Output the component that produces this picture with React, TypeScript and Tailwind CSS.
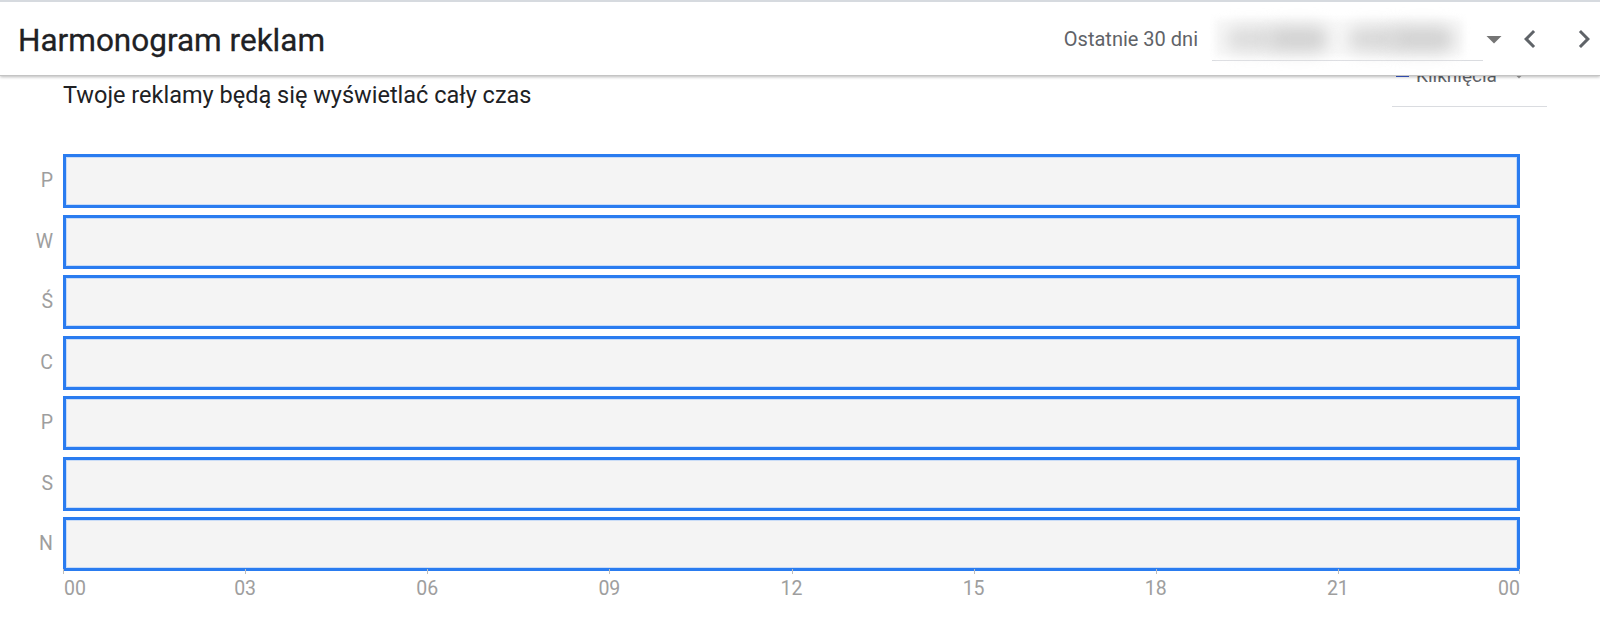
import React from "react";

const days = ["P", "W", "Ś", "C", "P", "S", "N"];
const hours = ["00", "03", "06", "09", "12", "15", "18", "21", "00"];
const GRID_W = 1457;

export default function App() {
  return (
    <div className="relative w-full h-[622px] overflow-hidden bg-white font-['Roboto',sans-serif] text-[#202124]">
      {/* Header */}
      <div className="relative z-10 h-[76px] bg-white border-t-2 border-[#d6dadf] border-b border-b-[#c4c4c4] shadow-[0_1px_3px_rgba(0,0,0,0.28)] flex items-center">
        <div className="pl-[18px] pt-[4px] text-[31.5px] leading-[36px] font-normal [-webkit-text-stroke:0.3px_#202124] text-[#202124]">
          Harmonogram reklam
        </div>
        <div className="ml-auto flex items-center -mr-[2px]">
          <span className="text-[20px] text-[#5f6368] mr-[14px]">Ostatnie 30 dni</span>
          <div className="relative w-[271px] h-[44px] border-b border-[#dadce0]">
            <div className="absolute left-[2px] right-[20px] top-[2px] bottom-[3px] bg-[#f8f8f8] blur-[3px]" />
            <div className="absolute left-[14px] top-[10px] w-[50px] h-[24px] rounded-full bg-[#dcdcdc] blur-[8px]" />
            <div className="absolute left-[56px] top-[9px] w-[60px] h-[26px] rounded-full bg-[#d2d2d2] blur-[8px]" />
            <div className="absolute left-[136px] top-[10px] w-[52px] h-[24px] rounded-full bg-[#d8d8d8] blur-[8px]" />
            <div className="absolute left-[178px] top-[9px] w-[64px] h-[26px] rounded-full bg-[#d2d2d2] blur-[8px]" />
          </div>
          <svg width="36" height="36" viewBox="0 0 24 24" className="-ml-[7px]">
            <path d="M7 10l5 5 5-5z" fill="#757575" />
          </svg>
          <svg width="36" height="36" viewBox="0 0 24 24">
            <path d="M15.41 7.41L14 6l-6 6 6 6 1.41-1.41L10.83 12z" fill="#5f6368" />
          </svg>
          <svg width="36" height="36" viewBox="0 0 24 24" className="ml-[18px]">
            <path d="M10 6L8.59 7.41 13.17 12l-4.58 4.59L10 18l6-6z" fill="#5f6368" />
          </svg>
        </div>
      </div>

      {/* Content */}
      <div className="relative">
        <div className="flex items-start justify-between">
          <div className="pl-[63px] pt-[4px] text-[23.5px] leading-[30px] text-[#202124]">
            Twoje reklamy będą się wyświetlać cały czas
          </div>
          <div className="mr-[53px] -mt-[12px] w-[155px] h-[43px] border-b border-[#dadce0] flex items-start">
            <div className="flex items-center h-[24px] pl-[4px]">
              <span className="w-[13px] h-[2px] bg-[#3b5bd0] mr-[7px]" />
              <span className="text-[19px] leading-[24px] text-[#5f6368]">Kliknięcia</span>
              <svg width="20" height="20" viewBox="0 0 24 24" className="ml-[12px]">
                <path d="M7 10l5 5 5-5z" fill="#9e9e9e" />
              </svg>
            </div>
          </div>
        </div>

        <div className="mt-[44px] flex flex-col gap-[6.5px]">
          {days.map((d, i) => (
            <div key={i} className="flex items-center">
              <div className="w-[63px] pr-[10px] text-right text-[19.5px] text-[#9e9e9e]">{d}</div>
              <div className="w-[1457px] h-[54px] border-[3px] border-[#2a7cf0] bg-[#f4f4f4] shadow-[inset_0_0_0_1px_#c9dcf7]" />
            </div>
          ))}
        </div>

        <div className="relative ml-[63px] h-[44px]" style={{ width: GRID_W }}>
          {hours.map((h, i) => {
            const x = (i * GRID_W) / 8;
            const isFirst = i === 0;
            const isLast = i === hours.length - 1;
            return (
              <React.Fragment key={i}>
                <div
                  className="absolute top-[-2px] w-px h-[5px] bg-[#bdbdbd]"
                  style={{ left: isLast ? x - 1 : x }}
                />
                <div
                  className={
                    "absolute top-[6px] text-[19.5px] leading-[24px] text-[#9e9e9e] " +
                    (isFirst ? "" : isLast ? "-translate-x-full" : "-translate-x-1/2")
                  }
                  style={{ left: isFirst ? x + 1 : x }}
                >
                  {h}
                </div>
              </React.Fragment>
            );
          })}
        </div>
      </div>
    </div>
  );
}
